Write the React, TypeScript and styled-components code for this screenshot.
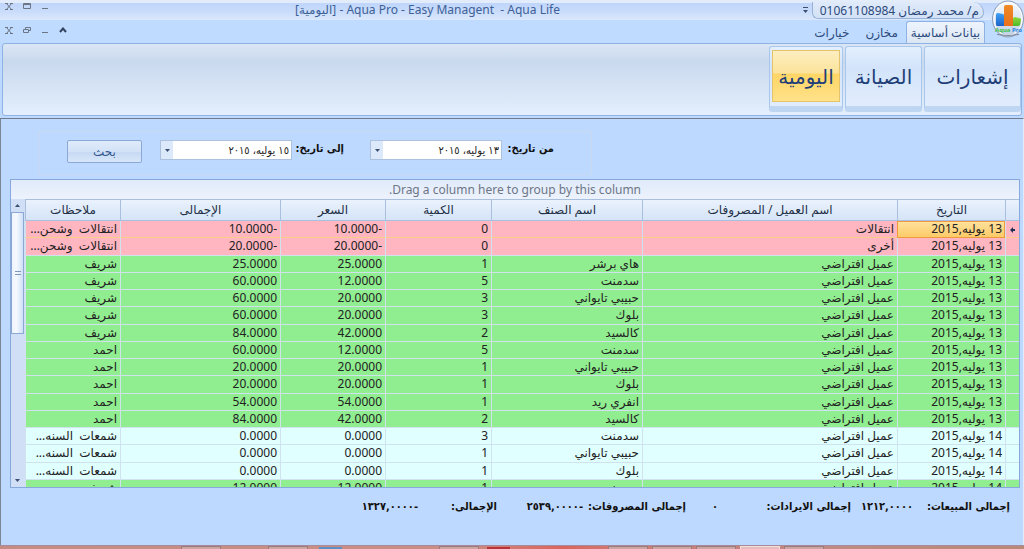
import React from 'react';
import styled, { createGlobalStyle, css } from 'styled-components';

const GlobalStyle = createGlobalStyle`
  * { box-sizing: border-box; }
  body {
    margin: 0;
    background: #bed9ff;
    font-family: 'Noto Sans', 'DejaVu Sans', sans-serif;
    font-size: 12px;
    color: #222;
  }
  #root { display: flex; flex-direction: column; min-height: 100vh; }
  button, input { font: inherit; color: inherit; margin: 0; padding: 0; }
`;

const condensed = css`
  font-family: 'DejaVu Sans Condensed', 'DejaVu Sans', sans-serif;
  font-size: 11px;
`;

const Window = styled.div`
  position: relative;
  flex: 1;
  display: flex;
  flex-direction: column;
`;

const TitleBar = styled.header`
  display: flex;
  height: 20px;
  border-top: 3px solid #e2ecfb;
  background: linear-gradient(#bfd5fb, #c9dcfb 50%, #dbe8fc);
`;

const QuickAccess = styled.div`
  display: flex;
  align-items: center;
  gap: 4px;
  margin-inline-start: 40px;
  margin-top: -3px;
`;

const UserPill = styled.div`
  width: 172px;
  height: 17px;
  line-height: 17px;
  padding-inline-start: 4px;
  border: 1px solid #98b2d6;
  border-top: 0;
  border-radius: 0 14px 8px 8px;
  background: linear-gradient(#dfeafa, #d3e2f7);
  color: #2c4a7c;
  white-space: nowrap;
`;

const Title = styled.h1`
  flex: 1;
  margin: 0;
  direction: ltr;
  text-align: center;
  white-space: pre;
  font-size: 12px;
  font-weight: 400;
  line-height: 14px;
  color: #3d6197;
`;

const Controls = styled.div<{ $raised?: boolean }>`
  display: flex;
  direction: ltr;
  align-items: flex-start;
  gap: 4px;
  padding-left: 2px;
  margin-top: ${p => (p.$raised ? -4 : 3)}px;
`;

const GlyphButton = styled.button`
  display: flex;
  align-items: center;
  justify-content: center;
  width: 14px;
  height: 14px;
  border: 0;
  background: none;
`;

const MenuBar = styled.nav`
  display: flex;
  justify-content: space-between;
  height: 23px;
  background: #bfdbff;
`;

const Tabs = styled.div`
  display: flex;
  align-items: flex-end;
  margin-inline-start: 39px;
`;

const Tab = styled.button<{ $active?: boolean }>`
  height: 22px;
  padding: 0 7px;
  line-height: 20px;
  border: 1px solid transparent;
  border-bottom: 0;
  border-radius: 3px 3px 0 0;
  background: none;
  color: #2c4a7c;
  ${p => p.$active && css`
    height: 23px;
    padding: 0 4px;
    margin-bottom: -1px;
    border-color: #8db2e3;
    background: linear-gradient(#eef4fd, #dbe6f4);
  `}
`;

const Ribbon = styled.section`
  display: flex;
  gap: 2px;
  height: 73px;
  margin: 0 2px;
  padding: 2px 0;
  border: 1px solid #8db2e3;
  border-radius: 3px;
  background: linear-gradient(#dbe6f4, #c9d9ed 25%, #e3effd);
`;

const RibbonGroup = styled.div<{ $width: number }>`
  width: ${p => p.$width}px;
  height: 66px;
  padding: 3px 2px 4px;
  border: 1px solid #a9c6ec;
  border-bottom: 6px solid #bfd6f3;
  border-radius: 3px;
  background: linear-gradient(#e3effd, #d3e4fa 35%, #e1edfd);
`;

const RibbonButton = styled.button<{ $active?: boolean }>`
  width: 100%;
  height: 100%;
  border: 0;
  background: none;
  color: #1f3f77;
  font-size: 20px;
  white-space: nowrap;
  ${p => p.$active && css`
    border: 1px solid #e5c36b;
    background: linear-gradient(#fdeec0, #fce39b 44%, #ffd565 46%, #ffe28a);
  `}
`;

const Content = styled.main`
  flex: 1;
  display: flex;
  flex-direction: column;
  margin-top: 2px;
  padding: 12px 3px 0 9px;
  border-top: 1px solid #6f7b8c;
  border-left: 1px solid #7d8694;
  border-right: 1px solid #e2ecfb;
  background: #bed9ff;
`;

const Filters = styled.form`
  display: flex;
  align-self: flex-end;
  align-items: flex-start;
  width: 554px;
  height: 44px;
  margin-left: 28px;
  padding: 8px 37px 0 28px;
  border: 1px solid #c8d9f0;

  & > div + label { margin-inline-start: 8px; }
`;

const FieldLabel = styled.label`
  ${condensed}
  width: 52px;
  line-height: 18px;
  font-weight: 700;
  white-space: nowrap;
  color: #111;
`;

const DateBox = styled.div`
  display: flex;
  width: 132px;
  height: 20px;
  margin-inline-end: 18px;
  border: 1px solid #abc1de;
  background: #fff;
`;

const DateInput = styled.input`
  && { ${condensed} }
  flex: 1;
  min-width: 0;
  padding: 0 2px;
  border: 0;
  background: none;
`;

const DropButton = styled.button`
  display: flex;
  align-items: center;
  justify-content: center;
  width: 12px;
  border: 0;
  background: #dce9fb;
`;

const SearchButton = styled.button`
  flex: 1;
  height: 23px;
  border: 1px solid #8aa9d6;
  border-radius: 2px;
  background: linear-gradient(#dfebfb, #d3e2f7 50%, #c6d9f3 52%, #d8e6f9);
  color: #35588f;
`;

const Grid = styled.section`
  height: 309px;
  margin-top: 4px;
  border: 1px solid #86a8da;
  background: #e6effc;
`;

const GroupHint = styled.div`
  height: 19px;
  line-height: 20px;
  text-align: center;
  color: #6d7686;
  background: linear-gradient(#e0eafa, #edf3fd);
`;

const GridBody = styled.div`
  display: flex;
  height: 288px;
  overflow: hidden;
`;

const Scroller = styled.div`
  flex: 1;
  overflow: hidden;
`;

const Table = styled.table`
  width: 100%;
  height: 298px;
  table-layout: fixed;
  border-collapse: separate;
  border-spacing: 0;
`;

const Head = styled.th`
  height: 22px;
  padding: 0;
  font-weight: 400;
  line-height: 18px;
  color: #222f45;
  border-top: 1px solid #a9bfdd;
  border-bottom: 1px solid #a9bfdd;
  border-left: 1px solid #a9bfdd;
  background: linear-gradient(#eaf2fd, #d5e4f7);
`;

type Tone = 'pink' | 'green' | 'cyan';
const tones: Record<Tone, string> = { pink: '#ffb6c1', green: '#90ee90', cyan: '#e0ffff' };

const Row = styled.tr<{ $tone: Tone; $current?: boolean }>`
  background: ${p => tones[p.$tone]};
  & > td { border-bottom-color: ${p => (p.$current ? '#f7cf86' : '#cfe2ee')}; }
`;

const Cell = styled.td<{ $picked?: boolean }>`
  height: 17px;
  padding: 0 3px;
  line-height: 14px;
  white-space: pre;
  overflow: hidden;
  border-bottom: 1px solid;
  border-left: 1px solid #cfe2ee;
  ${p => p.$picked && css`
    background: linear-gradient(#ffe3a0, #fdcb68);
    outline: 1px solid #ef9a3c;
    outline-offset: -1px;
  `}
`;

const ScrollBar = styled.div`
  display: flex;
  flex-direction: column;
  width: 14px;
  padding-right: 1px;
  background: #d0dff5;
`;

const ScrollArrow = styled.button`
  display: flex;
  align-items: center;
  justify-content: center;
  height: 13px;
  border: 0;
  background: none;
`;

const Thumb = styled.div`
  display: flex;
  align-items: center;
  justify-content: center;
  height: 122px;
  margin-bottom: auto;
  border: 1px solid #8ca9d3;
  background: linear-gradient(90deg, #edf4fe, #f5f9ff 40%, #cfdff6);
`;

const Totals = styled.dl`
  ${condensed}
  display: flex;
  align-items: center;
  height: 36px;
  margin: 0;
  padding-inline-start: 10px;
  font-weight: 700;
  color: #111;
  white-space: nowrap;
`;

const TotalLabel = styled.dt<{ $width: number }>`
  width: ${p => p.$width}px;
`;

const TotalValue = styled.dd<{ $width: number }>`
  width: ${p => p.$width}px;
  margin: 0;
`;

const Taskbar = styled.footer`
  display: flex;
  direction: ltr;
  gap: 4px;
  height: 4px;
  padding-left: 181px;
  border-top: 1px solid #a98a98;
  background: linear-gradient(90deg, #c48c84, #c98f86 45%, #d9655f 55%, #cf7a74 60%, #c08a84 80%, #b98a78);
`;

const Task = styled.span<{ $after?: number; $bright?: boolean }>`
  width: 40px;
  margin-right: ${p => p.$after ?? 0}px;
  border: 1px solid ${p => (p.$bright ? '#f2dede' : '#9c7b80')};
  border-bottom: 0;
  background: ${p => (p.$bright ? '#e6bcbc' : '#cda5a3')};
`;

const TaskIcon = styled.span<{ $color: string; $before: number; $after: number }>`
  width: 23px;
  height: 2px;
  margin: 1px ${p => p.$after}px 0 ${p => p.$before}px;
  background: ${p => p.$color};
`;

const Badge = styled.div`
  position: absolute;
  top: 0;
  right: 0;
  width: 38px;
  height: 38px;
`;

const Logo = () => (
  <svg width="38" height="38" viewBox="0 0 38 38" direction="ltr" aria-hidden="true">
    <defs>
      <linearGradient id="disc" x1="0" y1="0" x2="0" y2="1">
        <stop offset="0" stopColor="#f7fbff" />
        <stop offset="1" stopColor="#bfcfe4" />
      </linearGradient>
      <linearGradient id="blue" x1="0" y1="0" x2="0" y2="1">
        <stop offset="0" stopColor="#3fa0f4" />
        <stop offset="1" stopColor="#1c63c8" />
      </linearGradient>
      <linearGradient id="orange" x1="0" y1="0" x2="0" y2="1">
        <stop offset="0" stopColor="#f08a28" />
        <stop offset="1" stopColor="#e9701a" />
      </linearGradient>
      <linearGradient id="green" x1="0" y1="0" x2="0" y2="1">
        <stop offset="0" stopColor="#8fd93a" />
        <stop offset="1" stopColor="#4db92a" />
      </linearGradient>
    </defs>
    <ellipse cx="22" cy="19" rx="15.5" ry="18" fill="url(#disc)" stroke="#8b9db8" />
    <ellipse cx="22" cy="19" rx="14" ry="16.5" fill="none" stroke="#fff" />
    <path d="M10 15q0-2 2-2l5 1q1 0 1 2v10h-7q-1 0-1-2z" fill="url(#blue)" />
    <path d="M27 19q0-2 2-2l4 1q2 0 2 2l-1 5q-1 1-2 1h-5z" fill="url(#green)" />
    <path d="M18 7q0-2 2-2h5q2 0 2 2v19h-9z" fill="url(#orange)" />
    <path d="M11 34.500q11 2 22 0" stroke="#7b8798" fill="none" />
    <text x="9" y="32" fontSize="6" fontWeight="700" fontFamily="Noto Sans">
      <tspan fill="#3dbf46">Aqua</tspan>
      <tspan fill="#2b86e0"> Pro</tspan>
    </text>
  </svg>
);

const CloseIcon = () => (
  <svg width="8" height="7" viewBox="0 0 8 7" fill="none" stroke="#6c7686">
    <path d="M1.5.5l5 6M6.5.5l-5 6M0 .5h3M5 .5h3M0 6.5h3M5 6.5h3" />
  </svg>
);
const MaximizeIcon = () => (
  <svg width="8" height="6" viewBox="0 0 8 6" fill="none" stroke="#6c7686">
    <path d="M.5.5h7v5h-7zM.5 1.5h7" />
  </svg>
);
const RestoreIcon = () => (
  <svg width="8" height="6" viewBox="0 0 8 6" fill="none" stroke="#6c7686">
    <path d="M2.5 2V.5h5v3H6M.5 2.5h5v3h-5z" />
  </svg>
);
const MinimizeIcon = () => (
  <svg width="8" height="8" viewBox="0 0 8 8" fill="none" stroke="#6c7686">
    <path d="M1 6.500h6" />
  </svg>
);
const CollapseIcon = () => (
  <svg width="8" height="6" viewBox="0 0 8 6" fill="none" stroke="#33445f" strokeWidth="2">
    <path d="M1 5l3-3.5L7 5" />
  </svg>
);
const Triangle = ({ up }: { up?: boolean }) => (
  <svg width="5" height="3" viewBox="0 0 5 3" fill="#3b4f74">
    <path d={up ? 'M0 3h5L2.5 0z' : 'M0 0h5L2.5 3z'} />
  </svg>
);
const OverflowIcon = () => (
  <svg width="5" height="6" viewBox="0 0 5 6" fill="#3b4f74">
    <path d="M0 0h5v1H0zM0 3h5L2.5 6z" />
  </svg>
);

type Entry = [Tone, string, string, string, string, string, string, string];
const client = 'عميل افتراضي';
const d13 = '13 يوليه,2015';
const d14 = '14 يوليه,2015';
const moving = 'انتقالات  وشحن...';
const candles = 'شمعات  السنه...';
const rows: Entry[] = [
  ['pink', d13, 'انتقالات', '', '0', '-10.0000', '-10.0000', moving],
  ['pink', d13, 'أخرى', '', '0', '-20.0000', '-20.0000', moving],
  ['green', d13, client, 'هاي برشر', '1', '25.0000', '25.0000', 'شريف'],
  ['green', d13, client, 'سدمنت', '5', '12.0000', '60.0000', 'شريف'],
  ['green', d13, client, 'حبيبي تايواني', '3', '20.0000', '60.0000', 'شريف'],
  ['green', d13, client, 'بلوك', '3', '20.0000', '60.0000', 'شريف'],
  ['green', d13, client, 'كالسيد', '2', '42.0000', '84.0000', 'شريف'],
  ['green', d13, client, 'سدمنت', '5', '12.0000', '60.0000', 'احمد'],
  ['green', d13, client, 'حبيبي تايواني', '1', '20.0000', '20.0000', 'احمد'],
  ['green', d13, client, 'بلوك', '1', '20.0000', '20.0000', 'احمد'],
  ['green', d13, client, 'انفري ريد', '1', '54.0000', '54.0000', 'احمد'],
  ['green', d13, client, 'كالسيد', '2', '42.0000', '84.0000', 'احمد'],
  ['cyan', d14, client, 'سدمنت', '3', '0.0000', '0.0000', candles],
  ['cyan', d14, client, 'حبيبي تايواني', '1', '0.0000', '0.0000', candles],
  ['cyan', d14, client, 'بلوك', '1', '0.0000', '0.0000', candles],
  ['green', d14, client, 'سدمنت', '1', '12.0000', '12.0000', 'شريف'],
];

const heads = ['التاريخ', 'اسم العميل / المصروفات', 'اسم الصنف', 'الكمية', 'السعر', 'الإجمالى', 'ملاحظات'];

const Col = styled.col<{ $width?: number }>`
  width: ${p => (p.$width ? `${p.$width}px` : 'auto')};
`;

const DateField = ({ id, label, value }: { id: string; label: string; value: string }) => (
  <>
    <FieldLabel htmlFor={id}>{label}</FieldLabel>
    <DateBox>
      <DateInput id={id} type="text" defaultValue={value} />
      <DropButton type="button" aria-label={label}><Triangle /></DropButton>
    </DateBox>
  </>
);

export default function App() {
  return (
    <>
      <GlobalStyle />
      <Window dir="rtl" lang="ar">
        <TitleBar>
          <QuickAccess>
            <UserPill>م/ محمد رمضان 01061108984</UserPill>
            <OverflowIcon />
          </QuickAccess>
          <Title>{'[اليومية] - Aqua Pro - Easy Managent  - Aqua Life'}</Title>
          <Controls $raised>
            <GlyphButton aria-label="Close"><CloseIcon /></GlyphButton>
            <GlyphButton aria-label="Maximize"><MaximizeIcon /></GlyphButton>
            <GlyphButton aria-label="Minimize"><MinimizeIcon /></GlyphButton>
          </Controls>
        </TitleBar>
        <MenuBar>
          <Tabs>
            <Tab $active>بيانات أساسية</Tab>
            <Tab>مخازن</Tab>
            <Tab>خيارات</Tab>
          </Tabs>
          <Controls>
            <GlyphButton aria-label="Close document"><CloseIcon /></GlyphButton>
            <GlyphButton aria-label="Restore document"><RestoreIcon /></GlyphButton>
            <GlyphButton aria-label="Minimize document"><MinimizeIcon /></GlyphButton>
            <GlyphButton aria-label="Collapse ribbon"><CollapseIcon /></GlyphButton>
          </Controls>
        </MenuBar>
        <Ribbon>
          <RibbonGroup $width={97}><RibbonButton>إشعارات</RibbonButton></RibbonGroup>
          <RibbonGroup $width={77}><RibbonButton>الصيانة</RibbonButton></RibbonGroup>
          <RibbonGroup $width={74}><RibbonButton $active>اليومية</RibbonButton></RibbonGroup>
        </Ribbon>
        <Content>
          <Filters onSubmit={e => e.preventDefault()}>
            <DateField id="from" label="من تاريخ:" value="١٣ يوليه، ٢٠١٥" />
            <DateField id="to" label="إلى تاريخ:" value="١٥ يوليه، ٢٠١٥" />
            <SearchButton type="submit">بحث</SearchButton>
          </Filters>
          <Grid>
            <GroupHint>Drag a column here to group by this column.</GroupHint>
            <GridBody>
              <Scroller>
                <Table>
                  <colgroup>
                    <Col $width={14} />
                    <Col $width={108} />
                    <Col />
                    <Col $width={151} />
                    <Col $width={106} />
                    <Col $width={105} />
                    <Col $width={160} />
                    <Col $width={95} />
                  </colgroup>
                  <thead>
                    <tr>
                      <Head />
                      {heads.map(h => <Head key={h} scope="col">{h}</Head>)}
                    </tr>
                  </thead>
                  <tbody>
                    {rows.map(([tone, ...cells], r) => (
                      <Row key={r} $tone={tone} $current={r === 0}>
                        <Cell>
                          {r === 0 && (
                            <svg width="6" height="6" viewBox="0 0 6 6" fill="#222f55">
                              <path d="M0 3l3-3v2h2v2H3v2z" />
                            </svg>
                          )}
                        </Cell>
                        {cells.map((c, i) => <Cell key={i} $picked={r === 0 && i === 0}>{c}</Cell>)}
                      </Row>
                    ))}
                  </tbody>
                </Table>
              </Scroller>
              <ScrollBar>
                <ScrollArrow aria-label="Scroll up"><Triangle up /></ScrollArrow>
                <Thumb>
                  <svg width="6" height="4" viewBox="0 0 6 4" fill="#7f97bd">
                    <path d="M0 0h6v1H0zM0 3h6v1H0z" />
                  </svg>
                </Thumb>
                <ScrollArrow aria-label="Scroll down"><Triangle /></ScrollArrow>
              </ScrollBar>
            </GridBody>
          </Grid>
          <Totals>
            <TotalLabel $width={97}>إجمالى المبيعات:</TotalLabel>
            <TotalValue $width={62}>١٢١٢,٠٠٠٠</TotalValue>
            <TotalLabel $width={133}>إجمالى الايرادات:</TotalLabel>
            <TotalValue $width={32}>٠</TotalValue>
            <TotalLabel $width={103}>إجمالى المصروفات:</TotalLabel>
            <TotalValue $width={86}>-٢٥٣٩,٠٠٠٠</TotalValue>
            <TotalLabel $width={79}>الإجمالى:</TotalLabel>
            <TotalValue $width={60}>-١٣٢٧,٠٠٠٠</TotalValue>
          </Totals>
        </Content>
        <Taskbar>
          <Task $after={43} />
          <Task $after={4} />
          <TaskIcon $color="#5c8fc4" $before={3} $after={93} />
          <Task $after={4} />
          <TaskIcon $color="#b8343a" $before={0} $after={94} />
          <Task />
          <Task />
          <Task />
          <Task $bright />
          <Task />
        </Taskbar>
        <Badge><Logo /></Badge>
      </Window>
    </>
  );
}
